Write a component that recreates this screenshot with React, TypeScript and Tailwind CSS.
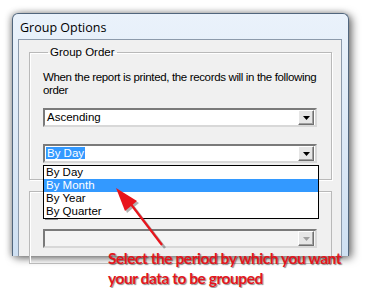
import React from "react";

const items = ["By Day", "By Month", "By Year", "By Quarter"];

function DropButton({ disabled }: { disabled?: boolean }) {
  return (
    <div className="flex h-[15px] w-[16px] items-center justify-center border border-t-white border-l-white border-r-[#707070] border-b-[#707070] bg-[#e6e6e6] shadow-[inset_-1px_-1px_0_#a0a0a0]">
      <svg width="7" height="4" viewBox="0 0 7 4">
        <path d="M0 0h7L3.5 4z" fill={disabled ? "#a0a0a0" : "#000"} />
      </svg>
    </div>
  );
}

function Combo({
  children,
  disabled,
}: {
  children?: React.ReactNode;
  disabled?: boolean;
}) {
  return (
    <div
      className={`flex h-[19px] w-[274px] items-center border-2 border-t-[#7a7a7a] border-l-[#7a7a7a] border-r-[#d8d8d8] border-b-[#d8d8d8] pl-[1px] pr-[1px] ${
        disabled ? "bg-[#f4f4f4]" : "bg-white"
      }`}
    >
      <div className="flex-1 text-[11.5px] leading-[13px]">{children}</div>
      <DropButton disabled={disabled} />
    </div>
  );
}

export default function App() {
  return (
    <div
      className="relative h-[288px] w-[371px] overflow-hidden bg-white text-black"
      style={{ fontFamily: '"Liberation Sans", Arial, sans-serif' }}
    >
      {/* window */}
      <div className="ml-[12px] mt-[13px] h-[243px] w-[337px] rounded-t-[6px] border border-[#51667d] border-b-0 bg-gradient-to-b from-[#eaf2fb] to-[#cfe0f2] shadow-[3px_2px_8px_rgba(0,0,0,0.55),-2px_0_6px_rgba(0,0,0,0.25)]">
        <div
          className="flex h-[25px] items-center pl-[7px] pt-[4px] text-[12.5px] text-black"
          style={{ fontFamily: '"Segoe UI", "Open Sans", sans-serif' }}
        >
          Group Options
        </div>
        <div className="relative ml-[5px] h-[217px] w-[324px] border border-b-0 border-[#8c9aab] bg-[#f0f0f0]">
          <fieldset className="ml-[10px] mt-[5px] h-[135px] w-[303px] border border-[#b9b9b9] px-[13px] shadow-[inset_1px_1px_0_#fff,1px_1px_0_#fff]">
            <legend className="ml-[5px] px-[2px] text-[11.5px] leading-[14px]">
              Group Order
            </legend>
            <p className="mt-[12px] whitespace-nowrap text-[11.5px] leading-[13px] tracking-[-0.35px]">
              When the report is printed, the records will in the following
              <br />
              order
            </p>
            <div className="mt-[11px]">
              <Combo>
                <span className="pl-[1px]">Ascending</span>
              </Combo>
            </div>
            <div className="mt-[17px]">
              <Combo>
                <span className="bg-[#3399ff] px-[1px] text-white">By Day</span>
              </Combo>
            </div>
          </fieldset>
          <fieldset className="ml-[10px] mt-[4px] h-[80px] w-[303px] border border-[#b9b9b9] px-[13px] shadow-[inset_1px_1px_0_#fff]">
            <legend className="ml-[5px] px-[2px] text-[11.5px] leading-[14px]">
              Grouping Options
            </legend>
            <div className="mt-[9px] flex items-center gap-[4px] pl-[2px]">
              <div className="h-[13px] w-[13px] border border-[#8f8f8f] bg-gradient-to-br from-[#e4e4e4] to-white" />
              <span className="text-[11.5px] leading-[13px]">
                Keep Group Data Together
              </span>
            </div>
            <div className="mt-[9px]">
              <Combo disabled />
            </div>
          </fieldset>

          {/* open dropdown list */}
          <div className="absolute left-[24px] top-[125px] w-[276px] border border-black bg-white text-[11.5px] leading-[13px]">
            {items.map((it) => (
              <div
                key={it}
                className={`h-[13px] pl-[2px] ${
                  it === "By Month" ? "bg-[#3399ff] text-white" : ""
                }`}
              >
                {it}
              </div>
            ))}
          </div>
        </div>
      </div>

      {/* annotation arrow */}
      <svg
        className="absolute left-0 top-0"
        width="371"
        height="288"
        viewBox="0 0 371 288"
      >
        <g opacity="0.45" transform="translate(2 2)">
          <path d="M130 203 L163 246" stroke="#555" strokeWidth="2.5" />
          <path d="M116 188 L125 211 L137 201 Z" fill="#555" />
        </g>
        <path d="M130 203 L162 245" stroke="#e8141b" strokeWidth="2.2" />
        <path d="M116 188 L125 211 L137 201 Z" fill="#e8141b" />
      </svg>

      {/* annotation text */}
      <div
        className="absolute left-[108px] top-[248px] text-[15.5px] font-bold leading-[20px] tracking-[-0.45px] text-[#e3161c] [text-shadow:1px_1px_1px_rgba(0,0,0,0.45)]"
        style={{ fontFamily: '"Lato", "Liberation Sans", sans-serif' }}
      >
        <div>Select the period by which you want</div>
        <div>your data to be grouped</div>
      </div>
    </div>
  );
}
